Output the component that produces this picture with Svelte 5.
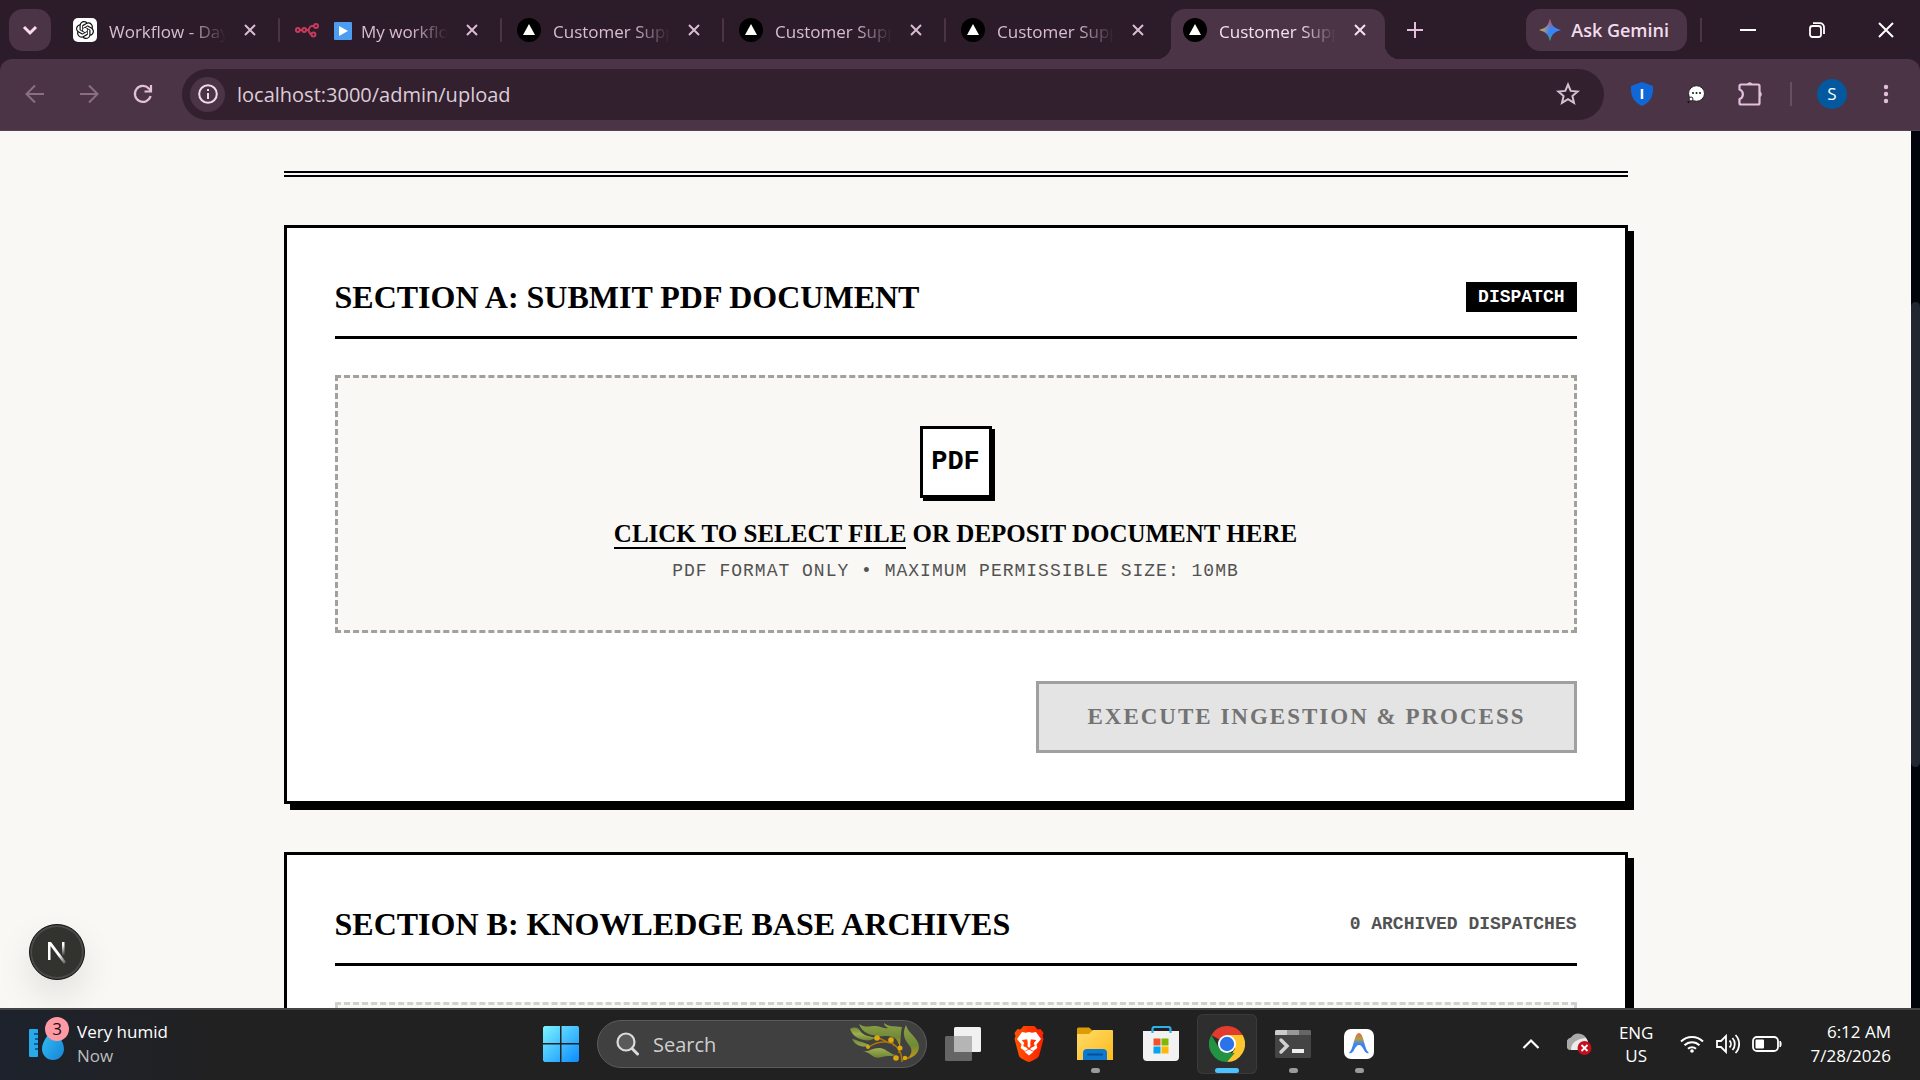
<script>
  const tabs = [
    { icon: 'openai', title: 'Workflow - Day 4 plan' },
    { icon: 'n8n', title: 'My workflow', play: true },
    { icon: 'next', title: 'Customer Support' },
    { icon: 'next', title: 'Customer Support' },
    { icon: 'next', title: 'Customer Support' },
    { icon: 'next', title: 'Customer Support', active: true }
  ];

  let archived = [];
  let address = 'localhost:3000/admin/upload';
  let file = null;

  function pickFile(event) {
    file = event.target.files[0] || null;
  }
</script>

<div class="desktop">
  <header class="browser">
    <div class="tab-strip">
      <button class="pill tab-search" aria-label="Search tabs">
        <svg width="18" height="18" viewBox="0 0 18 18"><path d="M3 6l6 6 6-6" fill="none" stroke="#fbd9f4" stroke-width="3" /></svg>
      </button>

      <div class="tabs">
        {#each tabs as tab, i}
          <div class="tab" class:active={tab.active} class:divided={i < 4}>
            <button class="tab-main">
              {#if tab.icon === 'openai'}
                <svg width="24" height="24" viewBox="0 0 24 24">
                  <rect width="24" height="24" rx="5" fill="#fff" />
                  <path transform="translate(3 3) scale(.75)" fill="#111" d="M22.2819 9.8211a5.9847 5.9847 0 0 0-.5157-4.9108 6.0462 6.0462 0 0 0-6.5098-2.9A6.0651 6.0651 0 0 0 4.9807 4.1818a5.9847 5.9847 0 0 0-3.9977 2.9 6.0462 6.0462 0 0 0 .7427 7.0966 5.98 5.98 0 0 0 .511 4.9107 6.051 6.051 0 0 0 6.5146 2.9001A5.9847 5.9847 0 0 0 13.2599 24a6.0557 6.0557 0 0 0 5.7718-4.2058 5.9894 5.9894 0 0 0 3.9977-2.9001 6.0557 6.0557 0 0 0-.7475-7.0729zm-9.022 12.6081a4.4755 4.4755 0 0 1-2.8764-1.0408l.1419-.0804 4.7783-2.7582a.7948.7948 0 0 0 .3927-.6813v-6.7369l2.02 1.1686a.071.071 0 0 1 .038.052v5.5826a4.504 4.504 0 0 1-4.4945 4.4944zm-9.6607-4.1254a4.4708 4.4708 0 0 1-.5346-3.0137l.142.0852 4.783 2.7582a.7712.7712 0 0 0 .7806 0l5.8428-3.3685v2.3324a.0804.0804 0 0 1-.0332.0615L9.74 19.9502a4.4992 4.4992 0 0 1-6.1408-1.6464zM2.3408 7.8956a4.485 4.485 0 0 1 2.3655-1.9728V11.6a.7664.7664 0 0 0 .3879.6765l5.8144 3.3543-2.0201 1.1685a.0757.0757 0 0 1-.071 0l-4.8303-2.7865A4.504 4.504 0 0 1 2.3408 7.872zm16.5963 3.8558L13.1038 8.364 15.1192 7.2a.0757.0757 0 0 1 .071 0l4.8303 2.7913a4.4944 4.4944 0 0 1-.6765 8.1042v-5.6772a.79.79 0 0 0-.407-.667zm2.0107-3.0231l-.142-.0852-4.7735-2.7818a.7759.7759 0 0 0-.7854 0L9.409 9.2297V6.8974a.0662.0662 0 0 1 .0284-.0615l4.8303-2.7866a4.4992 4.4992 0 0 1 6.6802 4.66zM8.3065 12.863l-2.02-1.1638a.0804.0804 0 0 1-.038-.0567V6.0742a4.4992 4.4992 0 0 1 7.3757-3.4537l-.142.0805L8.704 5.459a.7948.7948 0 0 0-.3927.6813zm1.0976-2.3654l2.602-1.4998 2.6069 1.4998v2.9994l-2.5974 1.4997-2.6067-1.4997Z" />
                </svg>
              {:else if tab.icon === 'n8n'}
                <svg width="24" height="24" viewBox="0 0 24 24" fill="none" stroke="#c73a5c" stroke-width="2">
                  <circle cx="2.800" cy="12" r="1.900" /><circle cx="9.200" cy="12" r="1.900" />
                  <circle cx="21" cy="8" r="2" /><circle cx="18.400" cy="16.400" r="2" />
                  <path d="M4.600 12h2.800M11.200 12h1.400c2.600 0 1.200-4 4-4H19M12.600 12c2.400 0 1 4.400 3.800 4.400" />
                </svg>
              {:else}
                <svg width="24" height="24" viewBox="0 0 24 24"><circle cx="12" cy="12" r="12" fill="#000" /><path d="M12 6l6 11H6z" fill="#fff" /></svg>
              {/if}
              <span class="tab-title">
                {#if tab.play}
                  <svg class="play" width="18" height="18" viewBox="0 0 18 18"><rect width="18" height="18" rx="1" fill="#4c9cf2" /><path d="M5 4l9 5-9 5z" fill="#fff" /></svg>
                {/if}
                {tab.title}
              </span>
            </button>
            <button class="tab-close" aria-label="Close tab">
              <svg width="12" height="12" viewBox="0 0 12 12"><path d="M1 1l10 10M11 1L1 11" stroke="currentColor" stroke-width="2" /></svg>
            </button>
          </div>
        {/each}
      </div>

      <button class="new-tab" aria-label="New tab">
        <svg width="16" height="16" viewBox="0 0 16 16"><path d="M8 0v16M0 8h16" stroke="#e3bfdb" stroke-width="2" /></svg>
      </button>

      <div class="window-controls">
        <button class="pill gemini">
          <svg width="22" height="22" viewBox="0 0 22 22">
            <defs>
              <linearGradient id="gem" x1="0" y1=".3" x2="1" y2=".6">
                <stop offset="0" stop-color="#fbbc04" /><stop offset=".35" stop-color="#7d8fb0" /><stop offset=".5" stop-color="#3b82f6" /><stop offset="1" stop-color="#4285f4" />
              </linearGradient>
              <linearGradient id="gem2" x1="0" y1="0" x2="0" y2="1">
                <stop offset="0" stop-color="#ea4335" /><stop offset=".4" stop-color="#ea4335" stop-opacity="0" /><stop offset=".65" stop-color="#34a853" stop-opacity="0" /><stop offset="1" stop-color="#34a853" />
              </linearGradient>
            </defs>
            <path d="M11 0c1.500 6.500 4.500 9.500 11 11-6.500 1.500-9.500 4.500-11 11-1.500-6.500-4.500-9.500-11-11 6.500-1.500 9.500-4.500 11-11z" fill="url(#gem)" />
            <path d="M11 0c1.500 6.500 4.500 9.500 11 11-6.500 1.500-9.500 4.500-11 11-1.500-6.500-4.500-9.500-11-11 6.500-1.500 9.500-4.500 11-11z" fill="url(#gem2)" />
          </svg>
          Ask Gemini
        </button>
        <span class="strip-divider"></span>
        <button class="win-btn" aria-label="Minimize">
          <svg width="16" height="16" viewBox="0 0 16 16"><path d="M0 8h16" stroke="#fff" stroke-width="2" /></svg>
        </button>
        <button class="win-btn" aria-label="Restore">
          <svg width="16" height="16" viewBox="0 0 16 16" fill="none" stroke="#fff" stroke-width="1.800"><rect x="1" y="4" width="11" height="11" rx="2.500" /><path d="M4 1.200h7a4 4 0 0 1 4 4V12" /></svg>
        </button>
        <button class="win-btn" aria-label="Close">
          <svg width="16" height="16" viewBox="0 0 16 16"><path d="M1 1l14 14M15 1L1 15" stroke="#fff" stroke-width="2" /></svg>
        </button>
      </div>
    </div>

    <div class="toolbar">
      <nav class="nav-buttons">
        <button class="tool" aria-label="Back">
          <svg width="20" height="20" viewBox="0 0 20 20" fill="none" stroke="#8a6f84" stroke-width="2"><path d="M19 10H2M10 1.500L1.500 10l8.500 8.500" /></svg>
        </button>
        <button class="tool" aria-label="Forward">
          <svg width="20" height="20" viewBox="0 0 20 20" fill="none" stroke="#8a6f84" stroke-width="2"><path d="M1 10h17M10 1.500l8.500 8.500-8.500 8.500" /></svg>
        </button>
        <button class="tool" aria-label="Reload">
          <svg width="20" height="20" viewBox="0 0 20 20" fill="none" stroke="#e3bfdb" stroke-width="2.200"><path d="M17.600 12a8 8 0 1 1-1.800-7.500L18 6.800M18 1v6.500h-6.500" /></svg>
        </button>
      </nav>

      <div class="address">
        <button class="site-info" aria-label="View site information">
          <svg width="20" height="20" viewBox="0 0 20 20"><circle cx="10" cy="10" r="8.800" fill="none" stroke="#f0dcea" stroke-width="2" /><path d="M10 9v6M10 5v2" stroke="#f0dcea" stroke-width="2" /></svg>
        </button>
        <input type="text" aria-label="Address" bind:value={address} />
        <button class="star" aria-label="Bookmark this tab">
          <svg width="24" height="24" viewBox="0 0 24 24"><path d="M12 2.500l2.700 6.400 6.900.6-5.200 4.500 1.600 6.800-6-3.600-6 3.600 1.600-6.800L2.400 9.500l6.900-.6z" fill="none" stroke="#d6bfd0" stroke-width="2" /></svg>
        </button>
      </div>

      <div class="extensions">
        <button class="tool" aria-label="Shield extension">
          <svg width="24" height="26" viewBox="0 0 24 26"><path d="M12 1l11 4c.6 9-2 16-11 20C3 21 .4 14 1 5z" fill="#1068d8" /><path d="M12 8v10" stroke="#fff" stroke-width="2.500" /></svg>
        </button>
        <button class="tool" aria-label="Chat extension">
          <svg width="18" height="18" viewBox="0 0 18 18"><ellipse cx="9.500" cy="8.500" rx="8" ry="7.800" fill="#fff" stroke="#222" /><circle cx="4" cy="14" r="2" fill="#fff" stroke="#222" /><circle cx="1.500" cy="17" r="1" fill="#111" /><g fill="#111"><circle cx="6" cy="8" r="1" /><circle cx="9.500" cy="8" r="1" /><circle cx="13" cy="8" r="1" /></g></svg>
        </button>
        <button class="tool" aria-label="Extensions">
          <svg width="28" height="26" viewBox="0 0 28 26">
            <path d="M5 3.500h17a1.500 1.500 0 0 1 1.500 1.500v17a1.500 1.500 0 0 1-1.500 1.500H5A1.500 1.500 0 0 1 3.500 22v-4c4.500-1.500 4.500-8 0-9.500V5A1.500 1.500 0 0 1 5 3.500z" fill="none" stroke="#e3bfdb" stroke-width="2.200" stroke-linejoin="round" />
            <path d="M11 3a3 3 0 0 1 5.500 0zM24 10.500a3 3 0 0 1 0 5.500z" fill="#e3bfdb" />
          </svg>
        </button>
        <span class="tool-divider"></span>
        <button class="tool" aria-label="Profile"><span class="avatar">S</span></button>
        <button class="tool" aria-label="Menu">
          <svg width="6" height="20" viewBox="0 0 6 20" fill="#e3bfdb"><circle cx="3" cy="3" r="2.200" /><circle cx="3" cy="10" r="2.200" /><circle cx="3" cy="17" r="2.200" /></svg>
        </button>
      </div>
    </div>
  </header>

  <div class="viewport">
    <main class="page">
      <div class="container">
        <div class="double-rule"></div>

        <section class="card">
          <div class="card-header">
            <h2>SECTION A: SUBMIT PDF DOCUMENT</h2>
            <span class="badge">DISPATCH</span>
          </div>

          <label class="dropzone">
            <input type="file" accept="application/pdf" on:change={pickFile} />
            <span class="pdf-box">PDF</span>
            <span class="drop-title"><span class="underlined">CLICK TO SELECT FILE</span> OR DEPOSIT DOCUMENT HERE</span>
            <span class="drop-hint">PDF FORMAT ONLY • MAXIMUM PERMISSIBLE SIZE: 10MB</span>
          </label>

          <div class="actions">
            <button class="submit" disabled={!file}>EXECUTE INGESTION &amp; PROCESS</button>
          </div>
        </section>

        <section class="card">
          <div class="card-header">
            <h2>SECTION B: KNOWLEDGE BASE ARCHIVES</h2>
            <span class="count">{archived.length} ARCHIVED DISPATCHES</span>
          </div>
          <div class="empty-archive"></div>
        </section>
      </div>

      <button class="dev-badge" aria-label="Open dev tools">
        <svg width="20" height="28" viewBox="0 0 20 28">
          <defs>
            <linearGradient id="nl" x1="0" y1="0" x2="1" y2="1"><stop offset=".6" stop-color="#fff" /><stop offset="1" stop-color="#fff" stop-opacity=".1" /></linearGradient>
            <linearGradient id="nr" x1="0" y1="0" x2="0" y2="1"><stop offset=".2" stop-color="#fff" /><stop offset="1" stop-color="#fff" stop-opacity="0" /></linearGradient>
          </defs>
          <path d="M1 22V4h3l15 20-2 2L3.500 8v14z" fill="url(#nl)" />
          <path d="M15 4h2.500v14H15z" fill="url(#nr)" />
        </svg>
      </button>
    </main>
    <div class="scrollbar"><div class="thumb"></div></div>
  </div>

  <footer class="taskbar">
    <button class="weather">
      <span class="weather-icon">
        <svg width="36" height="40" viewBox="0 0 36 40">
          <defs><linearGradient id="drop" x1="0" y1="0" x2="1" y2="1"><stop offset="0" stop-color="#35c3f3" /><stop offset="1" stop-color="#1683d8" /></linearGradient></defs>
          <rect x="0" y="5" width="9" height="28" rx="1" fill="#29a9e8" />
          <path d="M5 10h4M6 15h3M5 20h4M6 25h3" stroke="#0d5c9c" stroke-width="2" />
          <path d="M24 4c4 6 11 13 11 21a11 11 0 0 1-22 0c0-8 7-15 11-21z" fill="url(#drop)" />
        </svg>
        <span class="weather-count">3</span>
      </span>
      <span class="weather-text"><span>Very humid</span><span class="muted">Now</span></span>
    </button>

    <div class="apps">
      <button class="app" aria-label="Start">
        <svg width="36" height="36" viewBox="0 0 36 36">
          <defs><linearGradient id="win" x1="0" y1="0" x2="1" y2="1"><stop offset="0" stop-color="#7df3ff" /><stop offset="1" stop-color="#0a8cff" /></linearGradient></defs>
          <path d="M1.500 0H17v17H0V1.500zM18.500 0H35l1 1.500V17H18.500zM0 18.500h17V36H1.500L0 34.500zM18.500 18.500H36v16L34.500 36h-16z" fill="url(#win)" />
        </svg>
      </button>

      <label class="search">
        <svg width="24" height="24" viewBox="0 0 24 24" fill="none" stroke="#dcdcdc" stroke-linecap="round"><circle cx="10" cy="10" r="8.500" stroke-width="2.200" fill="#5a5a5a" /><path d="M16.500 17l5 5" stroke-width="3" /></svg>
        <input type="text" placeholder="Search" aria-label="Search" />
        <svg width="70" height="42" viewBox="0 0 70 42">
          <defs>
            <linearGradient id="kelp" x1="0" y1="0" x2="0" y2="1"><stop offset="0" stop-color="#6f8a35" /><stop offset=".5" stop-color="#9fb052" /><stop offset="1" stop-color="#6d8433" /></linearGradient>
            <linearGradient id="kelp-tip" x1="0" y1="0" x2="0" y2="1"><stop offset="0" stop-color="#8fa04a" /><stop offset=".6" stop-color="#6f8a35" /><stop offset="1" stop-color="#c49a14" /></linearGradient>
          </defs>
          <path d="M0 6c5-3 9-1 11 3 3 4 9 4 14 6-4 3-10 3-15 1C5 14 2 11 0 6z" fill="url(#kelp)" />
          <path d="M9 1c6 4 10 2 16 2 5 0 8 3 13 2-3-2-4-3-4-5 5 4 10 3 18 4-1 4-1 8-2 20-2-5-3-9-8-10-5-2-9 0-14-1C20 12 12 10 9 1z" fill="url(#kelp-tip)" />
          <path d="M2 16c4 0 7 3 10 3l8 3c-5 3-14 2-18-6zM13 28c6 1 9-3 16-3 7 0 10 6 17 7-6 2-8 0-14 2-9 3-10-4-19-6z" fill="url(#kelp)" />
          <path d="M56 2c1 7 13 13 13 22 0 6-6 11-12 12 5-5 6-9 2-14-5-6-7-12-3-20z" fill="url(#kelp-tip)" />
          <path d="M52 39c0-13-8-20-17-20-7 0-11 1-16 5M39 20l-10-5M44 23l-2-5M49 30v-5M52 37l8-3" fill="none" stroke="#a97608" stroke-width="1.500" />
          <g fill="#dca80a"><circle cx="18" cy="24" r="2" /><circle cx="27" cy="15" r="2.800" /><circle cx="41" cy="17" r="2.800" /><circle cx="50" cy="25" r="2.500" /><circle cx="46" cy="35" r="2.800" /><circle cx="55" cy="35" r="2.200" /></g>
        </svg>
      </label>

      <button class="app" aria-label="Task view">
        <svg width="36" height="34" viewBox="0 0 36 34"><rect x="9" y="0" width="27" height="25" rx="1.500" fill="#f1f1f1" /><rect x="0" y="9" width="27" height="25" rx="1.500" fill="#777" fill-opacity=".8" /><path d="M9 9h18v16H9z" fill="#b5b5b5" /></svg>
      </button>

      <button class="app" aria-label="Brave">
        <svg width="30" height="36" viewBox="0 0 30 36">
          <defs><linearGradient id="brave"><stop offset="0" stop-color="#ff5500" /><stop offset="1" stop-color="#ff2000" /></linearGradient></defs>
          <path d="M9.500 0h11l3 3.500 3-.5 3 4-1 3 1 3-4.500 17c-.5 2-8 5.500-10 6-2-.5-9.500-4-10-6L.5 13l1-3-1-3 3-4 3 .5z" fill="url(#brave)" />
          <path d="M8 6l4 .8 3-.8 3 .8L22 6l5 7-4.500 5.500.8 3.500-4 3-3-1.500.5-1.500 4-2-1-3 2.500-3-6-.8-.3 2.300.5 4.500L15 22l-1.500-2 .5-4.500-.3-2.300-6 .8 2.500 3-1 3 4 2 .5 1.500-3 1.500-4-3 .8-3.500L3 13z" fill="#fff" />
          <path d="M15 7l2 5-1 6h-2l-1-6zM15 23.500l4.500 2.300L15 29.500l-4.500-3.700z" fill="#fff" />
        </svg>
      </button>

      <button class="app running" aria-label="File Explorer">
        <svg width="36" height="34" viewBox="0 0 36 34">
          <defs><linearGradient id="fold" x1="0" y1="0" x2="1" y2="1"><stop offset="0" stop-color="#ffdc6b" /><stop offset="1" stop-color="#fdba1c" /></linearGradient></defs>
          <path d="M0 2a1.500 1.500 0 0 1 1.500-1.500H12L16 4v6H0z" fill="#dc9c06" />
          <path d="M0 7h12l4-4h19a1 1 0 0 1 1 1v29H0z" fill="url(#fold)" />
          <path d="M6 33V26a4 4 0 0 1 4-4h16a4 4 0 0 1 4 4v7z" fill="#0b79cf" /><path d="M11 27.500h14" stroke="#084f94" stroke-width="2" stroke-linecap="round" />
        </svg>
      </button>

      <button class="app" aria-label="Microsoft Store">
        <svg width="36" height="36" viewBox="0 0 36 36">
          <path d="M9.500 8V3a2 2 0 0 1 2-2h14a2 2 0 0 1 2 2v5" fill="none" stroke="#2cb1ea" stroke-width="2.200" />
          <path d="M0 5h36v26a4 4 0 0 1-4 4H4a4 4 0 0 1-4-4z" fill="#f2f2f2" />
          <path d="M9.500 5v2M27.500 5v2" stroke="#2cb1ea" stroke-width="2.200" />
          <path d="M10.500 12.500h7v7h-7z" fill="#f1502c" /><path d="M18.500 12.500h7v7h-7z" fill="#80b900" /><path d="M10.500 20.500h7v7h-7z" fill="#05a5ef" /><path d="M18.500 20.500h7v7h-7z" fill="#ffb902" />
        </svg>
      </button>

      <button class="app focused" aria-label="Google Chrome">
        <svg width="36" height="36" viewBox="0 0 36 36">
          <path d="M18 18L2.400 9A18 18 0 0 1 33.600 9z" fill="#e33b2e" />
          <path d="M18 9h15.600A18 18 0 0 1 18 36l8-13.500z" fill="#fdc62f" />
          <path d="M2.400 9l7.800 13.500L18 27h7.800L18 36A18 18 0 0 1 2.400 9z" fill="#229342" />
          <circle cx="18" cy="18" r="9" fill="#fff" /><circle cx="18" cy="18" r="7.200" fill="#2a73e8" />
        </svg>
      </button>

      <button class="app running" aria-label="Terminal">
        <svg width="36" height="28" viewBox="0 0 36 28"><rect width="36" height="28" rx="1.500" fill="#444" /><path d="M0 1.500A1.500 1.500 0 0 1 1.500 0H12v5H0z" fill="#ccc" /><path d="M12 0h12v5H12z" fill="#999" /><path d="M24 0h10.500A1.500 1.500 0 0 1 36 1.500V5H24z" fill="#666" /><path d="M6 10l6 6-6 6" fill="none" stroke="#d0d0d0" stroke-width="3.500" stroke-linecap="round" /><path d="M17 19h12v4H17z" fill="#eee" /></svg>
      </button>

      <button class="app running" aria-label="Antigravity">
        <svg width="30" height="30" viewBox="0 0 30 30">
          <defs><linearGradient id="anti" x1="0" y1="0" x2="0" y2="1"><stop offset="0" stop-color="#f0653a" /><stop offset=".3" stop-color="#a9a04a" /><stop offset=".55" stop-color="#3f86f0" /><stop offset="1" stop-color="#2f7cf6" /></linearGradient></defs>
          <rect width="30" height="30" rx="7" fill="#fff" />
          <path d="M5 24c5-4 5-20 10-20s5 16 10 20c-2 1-4-1-5-3-1.500-3-3-5-5-5s-3.500 2-5 5c-1 2-3 4-5 3z" fill="url(#anti)" />
        </svg>
      </button>
    </div>

    <div class="tray">
      <button class="tray-btn" aria-label="Show hidden icons">
        <svg width="18" height="12" viewBox="0 0 18 12"><path d="M1.500 10L9 2.500l7.500 7.500" fill="none" stroke="#fff" stroke-width="2.200" /></svg>
      </button>
      <button class="tray-btn cloud" aria-label="OneDrive">
        <svg width="26" height="24" viewBox="0 0 26 24"><path d="M2 18a7 7 0 0 1 2-12.500A9 9 0 0 1 20 8v9z" fill="#a9a9a9" /><path d="M4 18C4 11 9 7 19 6a7 7 0 0 1 2 6v6z" fill="#ececec" /><circle cx="17.500" cy="16" r="7" fill="#c50f1f" /><path d="M14.500 13l6 6M20.500 13l-6 6" stroke="#fff" stroke-width="1.800" /></svg>
      </button>
      <button class="tray-btn lang"><span>ENG</span><span>US</span></button>
      <button class="tray-btn status" aria-label="Network, volume and battery">
        <svg width="24" height="20" viewBox="0 0 24 20" fill="none" stroke="#fff" stroke-width="2"><path d="M1 7.500a15.500 15.500 0 0 1 22 0M4.500 11.300a10.500 10.500 0 0 1 15 0M8 14.800a5.700 5.700 0 0 1 8 0" /><circle cx="12" cy="17" r="1.800" fill="#fff" stroke="none" /></svg>
        <svg width="24" height="20" viewBox="0 0 24 20" fill="none" stroke="#fff" stroke-width="1.800"><path d="M1 7h4l5-5v16l-5-5H1zM13.500 6.500a5 5 0 0 1 0 7M16.500 4a9 9 0 0 1 0 12M19.500 1a13 13 0 0 1 0 18" /></svg>
        <svg width="30" height="16" viewBox="0 0 30 16"><rect x="1" y="1" width="25" height="14" rx="4" fill="none" stroke="#fff" stroke-width="1.800" /><rect x="3.500" y="3.500" width="8.500" height="9" rx="1" fill="#fff" /><path d="M28 5c1.500 1 1.500 5 0 6z" fill="#fff" stroke="#fff" /></svg>
      </button>
      <button class="tray-btn clock"><span>6:12 AM</span><span>7/28/2026</span></button>
    </div>
  </footer>
</div>

<style>
  :global(body) {
    margin: 0;
  }

  .desktop {
    display: flex;
    flex-direction: column;
    height: 100vh;
    overflow: hidden;
    font-family: "Open Sans", "Segoe UI", sans-serif;
    font-size: 17px;
  }

  button,
  input {
    font: inherit;
    color: inherit;
    background: none;
    border: 0;
    padding: 0;
    margin: 0;
  }

  svg {
    display: block;
    flex-shrink: 0;
  }

  /* browser chrome */
  .browser {
    flex-shrink: 0;
    background: #2c1b29;
    color: #d9bcd2;
  }

  .tab-strip {
    display: flex;
    align-items: flex-start;
    height: 50px;
    padding-top: 9px;
  }

  .pill {
    display: flex;
    align-items: center;
    justify-content: center;
    height: 42px;
    border-radius: 14px;
    background: #4a3445;
  }

  .tab-search {
    width: 42px;
    margin: 0 10px 0 9px;
  }

  .tabs {
    display: flex;
  }

  .tab {
    display: flex;
    position: relative;
    box-sizing: border-box;
    width: 222px;
    height: 42px;
    padding: 0 12px;
    align-items: center;
  }

  .tab.divided::after {
    content: "";
    position: absolute;
    right: 3px;
    top: 9px;
    width: 2px;
    height: 24px;
    border-radius: 1px;
    background: #4a3445;
  }

  .tab.active {
    width: 214px;
    height: 50px;
    padding-bottom: 8px;
    border-radius: 14px 14px 0 0;
    background: #4a3445;
    color: #f3e2ef;
  }

  /* flared feet of the selected tab */
  .tab.active::before,
  .tab.active::after {
    content: "";
    position: absolute;
    bottom: 0;
    width: 14px;
    height: 14px;
  }

  .tab.active::before {
    left: -14px;
    background: radial-gradient(circle at 0 0, transparent 14px, #4a3445 14px);
  }

  .tab.active::after {
    right: -14px;
    background: radial-gradient(circle at 100% 0, transparent 14px, #4a3445 14px);
  }

  .tab-main {
    display: flex;
    align-items: center;
    gap: 12px;
    flex: 1;
    min-width: 0;
  }

  .tab-title {
    display: flex;
    gap: 9px;
    align-items: center;
    width: 117px;
    padding-top: 2px;
    overflow: hidden;
    white-space: nowrap;
    text-align: left;
    mask-image: linear-gradient(90deg, #000 80px, transparent 117px);
  }

  .play {
    margin-left: 3px;
  }

  .tab-close {
    margin-right: 15px;
    padding: 6px 0;
  }

  .tab.active .tab-close {
    margin-right: 7px;
  }

  .new-tab {
    margin-left: 22px;
    padding: 13px 0;
  }

  .window-controls {
    display: flex;
    align-items: center;
    margin-left: auto;
  }

  .gemini {
    gap: 10px;
    padding: 0 18px 0 13px;
    color: #f3dcee;
    font-size: 18px;
    font-weight: 600;
  }

  .strip-divider {
    width: 2px;
    height: 24px;
    margin: 0 11px 0 13px;
    background: #4a3445;
  }

  .win-btn {
    display: flex;
    justify-content: center;
    width: 69px;
    padding: 13px 0;
  }

  .toolbar {
    display: flex;
    align-items: center;
    box-sizing: border-box;
    height: 72px;
    padding: 0 10px 1px 11px;
    background: #4a3445;
    border-radius: 12px 12px 0 0;
    border-bottom: 1px solid #57414f;
  }

  .nav-buttons,
  .extensions {
    display: flex;
    align-items: center;
    gap: 6px;
  }

  .tool {
    display: flex;
    align-items: center;
    justify-content: center;
    width: 48px;
    height: 48px;
  }

  .address {
    display: flex;
    align-items: center;
    flex: 1;
    height: 51px;
    margin: 0 14px 0 15px;
    padding: 0 24px 0 8px;
    box-sizing: border-box;
    border-radius: 26px;
    background: #33202f;
  }

  .site-info {
    display: flex;
    align-items: center;
    justify-content: center;
    width: 35px;
    height: 35px;
    border-radius: 50%;
    background: #4a3445;
  }

  .address input {
    flex: 1;
    margin-left: 12px;
    color: #dccdd8;
    font-size: 20px;
    outline: none;
  }

  .tool-divider {
    width: 2px;
    height: 24px;
    margin: 0 10px;
    background: #66505f;
  }

  .avatar {
    width: 30px;
    border-radius: 50%;
    background: #04589d;
    color: #fff;
    line-height: 30px;
    text-align: center;
  }

  /* page */
  .viewport {
    display: flex;
    flex: 1;
    min-height: 0;
  }

  .page {
    position: relative;
    flex: 1;
    overflow: hidden;
    padding: 40px 48px 0;
    background: #f9f8f4;
    color: #000;
  }

  .container {
    max-width: 1344px;
    margin: 0 auto;
  }

  .double-rule {
    border-top: 6px double #000;
  }

  .card {
    margin-top: 48px;
    padding: 48px;
    border: 3px solid #000;
    background: #fff;
    box-shadow: 6px 6px 0 #000;
  }

  .card-header {
    display: flex;
    align-items: center;
    justify-content: space-between;
    padding-bottom: 18px;
    border-bottom: 3px solid #000;
  }

  h2 {
    margin: 0;
    font-family: "Liberation Serif", Georgia, serif;
    font-size: 32px;
    line-height: 42px;
  }

  .badge,
  .count,
  .pdf-box,
  .drop-hint {
    font-family: "Liberation Mono", monospace;
  }

  .badge {
    padding: 0 12px;
    background: #000;
    color: #fff;
    font-size: 18px;
    font-weight: bold;
    line-height: 30px;
  }

  .count {
    color: #525252;
    font-size: 18px;
    font-weight: bold;
  }

  .dropzone {
    display: flex;
    flex-direction: column;
    align-items: center;
    margin-top: 36px;
    padding: 48px;
    border: 3px dashed #a0a0a0;
    background: #f9f8f4;
    cursor: pointer;
  }

  .dropzone input {
    display: none;
  }

  .pdf-box {
    width: 66px;
    border: 3px solid #000;
    background: #fff;
    box-shadow: 3px 3px 0 #000;
    font-size: 27px;
    font-weight: bold;
    line-height: 66px;
    text-align: center;
  }

  .drop-title {
    margin-top: 18px;
    font-family: "Liberation Serif", Georgia, serif;
    font-size: 25px;
    font-weight: bold;
    line-height: 36px;
  }

  .underlined {
    border-bottom: 2px solid #000;
  }

  .drop-hint {
    margin-top: 8px;
    color: #525252;
    font-size: 18px;
    letter-spacing: 1px;
    line-height: 22px;
  }

  .actions {
    display: flex;
    justify-content: flex-end;
    margin-top: 48px;
  }

  .submit {
    padding: 0 48px;
    border: 3px solid #a0a0a0;
    background: #e4e4e4;
    color: #737373;
    font-family: "Liberation Serif", Georgia, serif;
    font-size: 23px;
    font-weight: bold;
    letter-spacing: 2px;
    line-height: 66px;
  }

  .empty-archive {
    height: 240px;
    margin-top: 36px;
    border: 3px dashed #d0d0d0;
    background: #f9f8f4;
  }

  .dev-badge {
    position: absolute;
    left: 29px;
    bottom: 28px;
    display: flex;
    align-items: center;
    justify-content: center;
    width: 56px;
    height: 56px;
    border: 1px solid #111;
    border-radius: 50%;
    background: #32322f;
    box-shadow: inset 0 0 0 2px #4a4a48, 0 16px 36px rgba(0, 0, 0, 0.1);
  }

  .scrollbar {
    width: 9px;
    padding-top: 171px;
    background: #02040c;
  }

  .thumb {
    height: 465px;
    border-radius: 5px;
    background: #202632;
  }

  /* taskbar */
  .taskbar {
    display: grid;
    grid-template-columns: 1fr auto 1fr;
    align-items: center;
    flex-shrink: 0;
    height: 68px;
    padding-bottom: 2px;
    border-top: 2px solid #444;
    background: linear-gradient(90deg, #1d222c, #212121 220px);
    color: #fff;
  }

  .weather {
    display: flex;
    align-items: center;
    justify-self: start;
    gap: 12px;
    padding-left: 29px;
  }

  .weather-icon {
    position: relative;
  }

  .weather-count {
    position: absolute;
    top: -7px;
    right: -4px;
    width: 24px;
    border-radius: 50%;
    background: #ff99a4;
    color: #111;
    font-size: 17px;
    line-height: 24px;
  }

  .weather-text {
    display: flex;
    flex-direction: column;
    line-height: 24px;
    text-align: left;
  }

  .muted {
    color: #bdbdbd;
  }

  .apps {
    display: flex;
    align-items: center;
    gap: 6px;
  }

  .app {
    display: flex;
    position: relative;
    align-items: center;
    justify-content: center;
    width: 60px;
    height: 60px;
    border-radius: 6px;
  }

  .app.running::after,
  .app.focused::after {
    content: "";
    position: absolute;
    bottom: 1px;
    width: 9px;
    height: 5px;
    border-radius: 3px;
    background: #9a9a9a;
  }

  .app.focused {
    background: #2e2e2e;
    box-shadow: inset 0 0 0 1px #3a3a3a;
  }

  .app.focused::after {
    width: 24px;
    background: #4cc2ff;
  }

  .search {
    display: flex;
    align-items: center;
    box-sizing: border-box;
    width: 330px;
    height: 48px;
    padding: 0 6px 0 18px;
    border: 1px solid #5c5c5c;
    border-radius: 24px;
    background: #404040;
  }

  .search input {
    flex: 1;
    min-width: 0;
    margin-left: 13px;
    font-size: 20px;
    outline: none;
  }

  .search input::placeholder {
    color: #cfcfcf;
    opacity: 1;
  }

  .tray {
    display: flex;
    align-items: center;
    justify-self: end;
    padding-right: 29px;
  }

  .tray-btn {
    display: flex;
    align-items: center;
    line-height: 23px;
  }

  .cloud {
    margin-left: 27px;
  }

  .lang {
    flex-direction: column;
    margin-left: 26px;
  }

  .status {
    gap: 12px;
    margin-left: 27px;
  }

  .clock {
    flex-direction: column;
    align-items: flex-end;
    margin-left: 28px;
    line-height: 24px;
  }
</style>
